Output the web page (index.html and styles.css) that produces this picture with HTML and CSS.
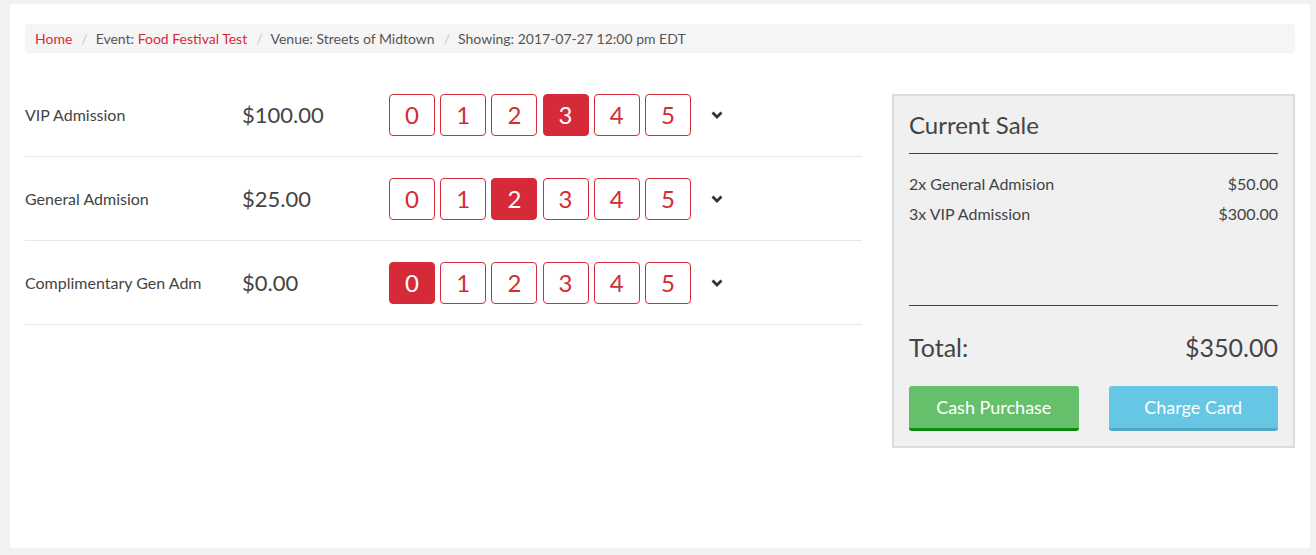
FILE: index.html
```html
<!DOCTYPE html>
<html lang="en">
<head>
    <meta charset="UTF-8">
    <meta name="viewport" content="width=device-width, initial-scale=1.0">
    <title>Box Office</title>
    <link rel="stylesheet" href="styles.css">
</head>
<body>
  <div class="page">

    <ol class="breadcrumb">
        <li><a href="#">Home</a></li>
        <li>Event: <a href="#">Food Festival Test</a></li>
        <li>Venue: Streets of Midtown</li>
        <li>Showing: 2017-07-27 12:00 pm EDT</li>
    </ol>

    <div class="layout">
        <div class="tickets">
            <div class="ticket-row">
                <div class="ticket-name">VIP Admission</div>
                <div class="ticket-price">$100.00</div>
                <div class="qty">
                    <button class="qty-btn">0</button>
                    <button class="qty-btn">1</button>
                    <button class="qty-btn">2</button>
                    <button class="qty-btn active">3</button>
                    <button class="qty-btn">4</button>
                    <button class="qty-btn">5</button>
                </div>
                <svg class="more" width="12" height="8" viewBox="0 0 12 8"><polyline points="1.5,1.5 6,6 10.5,1.5" fill="none" stroke="#333" stroke-width="2.8"/></svg>
            </div>
            <div class="ticket-row">
                <div class="ticket-name">General Admision</div>
                <div class="ticket-price">$25.00</div>
                <div class="qty">
                    <button class="qty-btn">0</button>
                    <button class="qty-btn">1</button>
                    <button class="qty-btn active">2</button>
                    <button class="qty-btn">3</button>
                    <button class="qty-btn">4</button>
                    <button class="qty-btn">5</button>
                </div>
                <svg class="more" width="12" height="8" viewBox="0 0 12 8"><polyline points="1.5,1.5 6,6 10.5,1.5" fill="none" stroke="#333" stroke-width="2.8"/></svg>
            </div>
            <div class="ticket-row">
                <div class="ticket-name">Complimentary Gen Adm</div>
                <div class="ticket-price">$0.00</div>
                <div class="qty">
                    <button class="qty-btn active">0</button>
                    <button class="qty-btn">1</button>
                    <button class="qty-btn">2</button>
                    <button class="qty-btn">3</button>
                    <button class="qty-btn">4</button>
                    <button class="qty-btn">5</button>
                </div>
                <svg class="more" width="12" height="8" viewBox="0 0 12 8"><polyline points="1.5,1.5 6,6 10.5,1.5" fill="none" stroke="#333" stroke-width="2.8"/></svg>
            </div>
        </div>

        <div class="sale">
            <h3 class="sale-title">Current Sale</h3>
            <ul class="sale-items">
                <li><span>2x General Admision</span><span>$50.00</span></li>
                <li><span>3x VIP Admission</span><span>$300.00</span></li>
            </ul>
            <div class="sale-total">
                <span>Total:</span>
                <span>$350.00</span>
            </div>
            <div class="sale-actions">
                <button class="btn btn-cash">Cash Purchase</button>
                <button class="btn btn-card">Charge Card</button>
            </div>
        </div>
    </div>

  </div>
</body>
</html>
```

FILE: styles.css
```css
body {
    margin: 0;
    padding: 4px 6px 0 10px;
    background-color: #f1f1f1;
    font-family: Lato, "Open Sans", sans-serif;
    color: #444;
}
.page {
    background-color: #fff;
    height: 544px;
    padding: 20px 15px 0;
    box-sizing: border-box;
}
.breadcrumb {
    display: flex;
    margin: 0;
    padding: 5px 10px;
    list-style: none;
    background-color: #f5f5f5;
    border-radius: 4px;
    font-size: 14px;
    line-height: 19px;
    color: #555;
}
.breadcrumb li + li::before {
    content: "/";
    color: #ccc;
    padding: 0 8px 0 9px;
}
.breadcrumb a {
    color: #d52b38;
    text-decoration: none;
}
.layout {
    display: grid;
    grid-template-columns: 837px 403px;
    column-gap: 30px;
    margin-top: 20px;
}
.ticket-row {
    display: flex;
    align-items: center;
    height: 83px;
    border-bottom: 1px solid #e8e8e8;
}
.ticket-name {
    width: 217px;
    font-size: 16px;
}
.ticket-price {
    width: 147px;
    font-size: 22px;
}
.qty {
    display: flex;
    gap: 5.2px;
}
.qty-btn {
    width: 46px;
    height: 42px;
    padding: 0;
    border: 1px solid #d52b38;
    border-radius: 4px;
    background-color: #fff;
    color: #d52b38;
    font-family: Lato, sans-serif;
    font-size: 24px;
    cursor: pointer;
}
.qty-btn.active {
    background-color: #d52b38;
    color: #fff;
}
.more {
    margin-left: 20px;
}
.sale {
    align-self: start;
    margin-top: 21px;
    padding: 15px 15px 15px;
    background-color: #f0f0f0;
    border: 2px solid #dcdcdc;
}
.sale-title {
    margin: 0;
    padding: 0 0 15px;
    font-size: 24px;
    font-weight: normal;
    line-height: 27px;
    border-bottom: 1px solid #444;
}
.sale-items {
    margin: 0;
    padding: 15px 0 0;
    list-style: none;
    height: 136px;
    border-bottom: 1px solid #444;
    font-size: 16px;
    line-height: 30px;
}
.sale-items li,
.sale-total {
    display: flex;
    justify-content: space-between;
}
.sale-total {
    padding-top: 28px;
    font-size: 25px;
    line-height: 26px;
}
.sale-actions {
    display: grid;
    grid-template-columns: 1fr 1fr;
    column-gap: 30px;
    margin-top: 26px;
}
.btn {
    height: 45px;
    border: none;
    border-bottom: 3px solid;
    border-radius: 3px;
    color: #fff;
    font-family: Lato, sans-serif;
    font-size: 18px;
    cursor: pointer;
}
.btn-cash {
    background-color: #66bf6a;
    border-bottom-color: #0a8a0a;
}
.btn-card {
    background-color: #65c7e4;
    border-bottom-color: #50a8c2;
}
```
